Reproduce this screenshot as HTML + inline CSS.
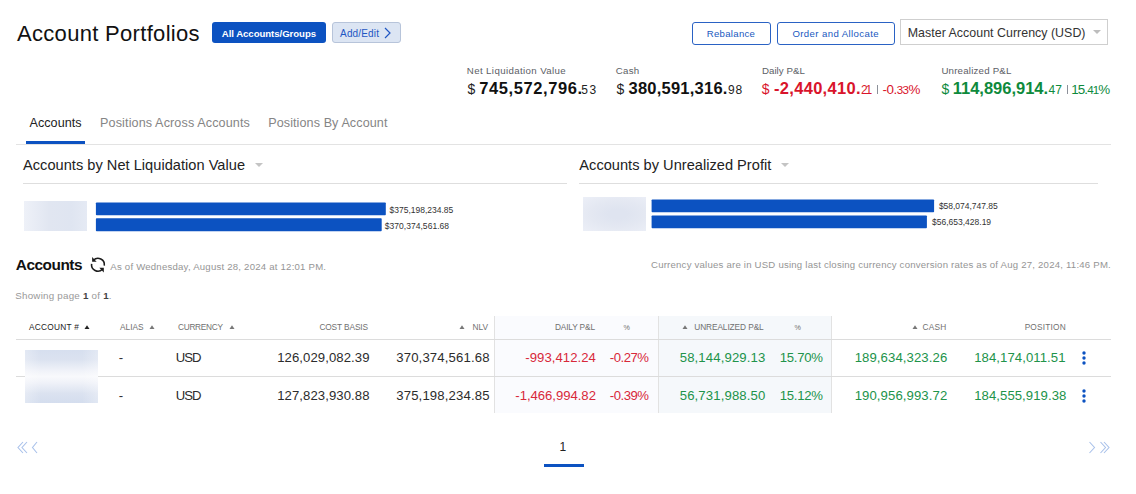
<!DOCTYPE html>
<html><head><meta charset="utf-8"><title>Account Portfolios</title>
<style>
html,body{margin:0;padding:0;background:#fff;}
body{width:1136px;height:494px;position:relative;overflow:hidden;font-family:"Liberation Sans",sans-serif;}
.t{position:absolute;white-space:nowrap;}
.r{position:absolute;}
</style></head><body>
<div id="k7dc986" class="t" style="left:17.00px;top:20.50px;font-size:22px;line-height:26px;color:#111;letter-spacing:0.311px;">Account Portfolios</div>
<div class="r" style="left:212px;top:22px;width:114px;height:21px;background:#0c52c1;border-radius:3px;"></div>
<div id="kbe6db4" class="t" style="left:221.82px;top:27.50px;font-size:9.6px;line-height:12px;color:#fff;font-weight:700;letter-spacing:-0.045px;">All Accounts/Groups</div>
<div class="r" style="left:332px;top:22px;width:69px;height:21px;background:#dce5f3;border:1px solid #b7c4da;box-sizing:border-box;border-radius:3px;"></div>
<div id="k07eb76" class="t" style="left:340.06px;top:28.00px;font-size:10px;line-height:12px;color:#1f56c3;letter-spacing:0.159px;">Add/Edit</div>
<svg class="r" style="left:383px;top:27px" width="9" height="12" viewBox="0 0 9 12"><path d="M2 1 L7 6 L2 11" fill="none" stroke="#1f56c3" stroke-width="1.2"/></svg>
<div class="r" style="left:692px;top:22px;width:79px;height:23px;border:1px solid #2a62c4;box-sizing:border-box;border-radius:3px;"></div>
<div id="ked9562" class="t" style="left:706.70px;top:28.00px;font-size:9.6px;line-height:12px;color:#2058c0;letter-spacing:0.300px;">Rebalance</div>
<div class="r" style="left:777px;top:22px;width:118px;height:23px;border:1px solid #2a62c4;box-sizing:border-box;border-radius:3px;"></div>
<div id="ke1895a" class="t" style="left:792.38px;top:28.00px;font-size:9.6px;line-height:12px;color:#2058c0;letter-spacing:0.403px;">Order and Allocate</div>
<div class="r" style="left:900px;top:19px;width:208px;height:26px;border:1px solid #cfcfcf;box-sizing:border-box;"></div>
<div id="kf368cb" class="t" style="left:907.76px;top:25.50px;font-size:12.4px;line-height:15px;color:#333;letter-spacing:0.028px;">Master Account Currency (USD)</div>
<svg class="r" style="left:1093px;top:30px" width="8" height="4" viewBox="0 0 8 4"><path d="M0 0 L8 0 L4 4Z" fill="#bdbdbd"/></svg>
<div id="kb8d709" class="t" style="left:466.82px;top:64.50px;font-size:9.7px;line-height:12px;color:#5c6066;letter-spacing:0.376px;">Net Liquidation Value</div>
<div id="k093867" class="t" style="left:615.82px;top:64.50px;font-size:9.7px;line-height:12px;color:#5c6066;letter-spacing:0.215px;">Cash</div>
<div id="kf58d0e" class="t" style="left:761.94px;top:64.50px;font-size:9.7px;line-height:12px;color:#5c6066;letter-spacing:0.040px;">Daily P&amp;L</div>
<div id="k35cd6d" class="t" style="left:941.38px;top:64.50px;font-size:9.7px;line-height:12px;color:#5c6066;letter-spacing:0.208px;">Unrealized P&amp;L</div>
<div id="k32260f" class="t" style="left:467.38px;top:80.50px;font-size:14px;line-height:17px;color:#222;">$</div>
<div id="k13e082" class="t" style="left:479.32px;top:78.00px;font-size:16.5px;line-height:20px;color:#111;font-weight:700;letter-spacing:0.582px;">745,572,796.</div>
<div id="kb41ef9" class="t" style="left:581.20px;top:83.00px;font-size:12px;line-height:14px;color:#222;letter-spacing:1.600px;">53</div>
<div id="k39bf1c" class="t" style="left:616.44px;top:80.50px;font-size:14px;line-height:17px;color:#222;">$</div>
<div id="kf3be98" class="t" style="left:628.50px;top:78.00px;font-size:16.5px;line-height:20px;color:#111;font-weight:700;letter-spacing:0.231px;">380,591,316.</div>
<div id="kea9ac0" class="t" style="left:728.00px;top:83.00px;font-size:12px;line-height:14px;color:#222;letter-spacing:0.800px;">98</div>
<div id="k6d3cdc" class="t" style="left:761.76px;top:80.50px;font-size:14px;line-height:17px;color:#d9142b;">$</div>
<div id="k84a776" class="t" style="left:774.00px;top:78.00px;font-size:16.5px;line-height:20px;color:#d9142b;font-weight:700;letter-spacing:0.304px;">-2,440,410.</div>
<div id="k3ec832" class="t" style="left:861.00px;top:83.00px;font-size:12px;line-height:14px;color:#d9142b;letter-spacing:-2.080px;">21</div>
<div class="r" style="left:877px;top:85px;width:1.2px;height:9px;background:#8c9099;"></div>
<div id="ke28620" class="t" style="left:882.44px;top:81.50px;font-size:13.4px;line-height:16px;color:#d9142b;letter-spacing:-0.480px;">-0.<span style="font-size:11.6px">33</span>%</div>
<div id="kfc0a1b" class="t" style="left:941.38px;top:80.50px;font-size:14px;line-height:17px;color:#0e8a3c;">$</div>
<div id="k32c1b9" class="t" style="left:952.76px;top:78.00px;font-size:16.5px;line-height:20px;color:#0e8a3c;font-weight:700;letter-spacing:-0.013px;">114,896,914.</div>
<div id="kf66f34" class="t" style="left:1048.50px;top:83.00px;font-size:12px;line-height:14px;color:#0e8a3c;">47</div>
<div class="r" style="left:1067px;top:85px;width:1.2px;height:9px;background:#8c9099;"></div>
<div id="k944a10" class="t" style="left:1071.20px;top:81.50px;font-size:13.4px;line-height:16px;color:#0e8a3c;letter-spacing:-0.896px;">15.<span style="font-size:11.6px">41</span>%</div>
<div id="kfa5fb3" class="t" style="left:29.56px;top:115.50px;font-size:12.6px;line-height:15px;color:#222;letter-spacing:0.024px;">Accounts</div>
<div id="k3f0277" class="t" style="left:100.08px;top:115.50px;font-size:12.6px;line-height:15px;color:#858585;letter-spacing:0.114px;">Positions Across Accounts</div>
<div id="kb1b9a8" class="t" style="left:268.20px;top:115.50px;font-size:12.6px;line-height:15px;color:#858585;letter-spacing:0.084px;">Positions By Account</div>
<div class="r" style="left:16px;top:144px;width:1095px;height:1px;background:#e3e3e3;"></div>
<div class="r" style="left:26px;top:141px;width:59px;height:3px;background:#0c52c1;"></div>
<div id="k8d5fb9" class="t" style="left:23.00px;top:156.40px;font-size:14.6px;line-height:18px;color:#222;letter-spacing:0.025px;">Accounts by Net Liquidation Value</div>
<svg class="r" style="left:255px;top:163px" width="8" height="4" viewBox="0 0 8 4"><path d="M0 0 L8 0 L4 4Z" fill="#c4c4c4"/></svg>
<div class="r" style="left:23px;top:183px;width:544px;height:1px;background:#dedede;"></div>
<div class="r" style="left:24px;top:201px;width:63px;height:30px;background:linear-gradient(90deg,#eef1f8,#e1e6f1 40%,#dfe5f1 75%,#e5eaf4);"></div>
<svg class="r" style="left:0;top:0" width="1136" height="260"><rect x="95.9" y="202.4" width="289.9" height="12.9" rx="0.8" fill="#0c52c1"/><rect x="95.9" y="218.3" width="285.8" height="12.9" rx="0.8" fill="#0c52c1"/><rect x="651.6" y="199.5" width="282.5" height="12.7" rx="0.8" fill="#0c52c1"/><rect x="651.6" y="215.5" width="275.3" height="12.8" rx="0.8" fill="#0c52c1"/></svg>
<div id="k875f6b" class="t" style="left:389.50px;top:205.00px;font-size:8.5px;line-height:10px;color:#333;">$375,198,234.85</div>
<div id="kad5ce5" class="t" style="left:384.76px;top:221.00px;font-size:8.5px;line-height:10px;color:#333;letter-spacing:0.034px;">$370,374,561.68</div>
<div id="k8ebbdb" class="t" style="left:579.32px;top:156.40px;font-size:14.6px;line-height:18px;color:#222;letter-spacing:0.019px;">Accounts by Unrealized Profit</div>
<svg class="r" style="left:781px;top:163px" width="8" height="4" viewBox="0 0 8 4"><path d="M0 0 L8 0 L4 4Z" fill="#c4c4c4"/></svg>
<div class="r" style="left:579px;top:183px;width:519px;height:1px;background:#dedede;"></div>
<div class="r" style="left:583px;top:197px;width:63px;height:34px;background:radial-gradient(ellipse at 55% 50%,#dfe4f0 20%,#e4e8f2 55%,#ecEff7 100%);"></div>
<div id="ke7ea78" class="t" style="left:938.88px;top:200.60px;font-size:8.5px;line-height:10px;color:#333;letter-spacing:-0.015px;">$58,074,747.85</div>
<div id="k7ef581" class="t" style="left:932.00px;top:216.70px;font-size:8.5px;line-height:10px;color:#333;">$56,653,428.19</div>
<div id="kdf97c9" class="t" style="left:15.76px;top:256.00px;font-size:15.4px;line-height:18px;color:#111;font-weight:700;letter-spacing:-0.480px;">Accounts</div>
<svg class="r" style="left:84px;top:252px" width="30" height="25" viewBox="0 0 30 25">
<path d="M9.42 8.22 A6.4 6.4 0 0 1 20.29 13.64" fill="none" stroke="#1c1c1c" stroke-width="1.6"/>
<path d="M7.61 11.86 A6.4 6.4 0 0 0 18.48 17.28" fill="none" stroke="#1c1c1c" stroke-width="1.6"/>
<path d="M8.1 5.0 L8.1 9.7 L12.6 9.7 Z" fill="#1c1c1c"/>
<path d="M19.8 20.5 L19.8 15.8 L15.3 15.8 Z" fill="#1c1c1c"/>
</svg>
<div id="k90735d" class="t" style="left:110.32px;top:260.80px;font-size:9.6px;line-height:12px;color:#959595;letter-spacing:0.220px;">As of Wednesday, August 28, 2024 at 12:01 PM.</div>
<div id="k9149b4" class="t" style="left:651.00px;top:259.00px;font-size:9.6px;line-height:12px;color:#959595;letter-spacing:0.216px;">Currency values are in USD using last closing currency conversion rates as of Aug 27, 2024, 11:46 PM.</div>
<div id="k97567b" class="t" style="left:15.28px;top:290.00px;font-size:9.8px;line-height:12px;color:#999;letter-spacing:0.220px;">Showing page <b style="color:#444">1</b> of <b style="color:#444">1</b>.</div>
<div class="r" style="left:495px;top:316px;width:164px;height:97px;background:#fafbfe;"></div>
<div class="r" style="left:659px;top:316px;width:172px;height:97px;background:#f5f8fb;"></div>
<div class="r" style="left:494px;top:316px;width:1px;height:97px;background:#e2e2e2;"></div>
<div class="r" style="left:658px;top:316px;width:1px;height:97px;background:#e2e2e2;"></div>
<div class="r" style="left:831px;top:316px;width:1px;height:97px;background:#e2e2e2;"></div>
<div class="r" style="left:16px;top:339px;width:1095px;height:1px;background:#dcdcdc;"></div>
<div class="r" style="left:16px;top:376px;width:1095px;height:1px;background:#dcdcdc;"></div>
<div id="k4f9642" class="t" style="left:29.00px;top:322.00px;font-size:8.3px;line-height:10px;color:#222;letter-spacing:0.260px;">ACCOUNT #</div>
<svg class="r" style="left:84px;top:325px" width="6" height="4" viewBox="0 0 6 4"><path d="M0.5 4 L5.5 4 L3 0.2Z" fill="#222"/></svg>
<div id="k850b2c" class="t" style="left:120.00px;top:322.00px;font-size:8.3px;line-height:10px;color:#707070;">ALIAS</div>
<svg class="r" style="left:149px;top:325px" width="6" height="4" viewBox="0 0 6 4"><path d="M0.5 4 L5.5 4 L3 0.2Z" fill="#777"/></svg>
<div id="k6497aa" class="t" style="left:178.00px;top:322.00px;font-size:8.3px;line-height:10px;color:#707070;letter-spacing:-0.298px;">CURRENCY</div>
<svg class="r" style="left:228.5px;top:325px" width="6" height="4" viewBox="0 0 6 4"><path d="M0.5 4 L5.5 4 L3 0.2Z" fill="#777"/></svg>
<div id="k6be1c3" class="t" style="left:319.38px;top:322.00px;font-size:8.3px;line-height:10px;color:#707070;letter-spacing:-0.106px;">COST BASIS</div>
<svg class="r" style="left:459px;top:325px" width="6" height="4" viewBox="0 0 6 4"><path d="M0.5 4 L5.5 4 L3 0.2Z" fill="#777"/></svg>
<div id="k346a8f" class="t" style="left:472.50px;top:322.00px;font-size:8.3px;line-height:10px;color:#707070;">NLV</div>
<div id="k496428" class="t" style="left:554.94px;top:322.00px;font-size:8.3px;line-height:10px;color:#707070;letter-spacing:-0.140px;">DAILY P&amp;L</div>
<div id="k6b3da3" class="t" style="left:623.50px;top:323.00px;font-size:7.2px;line-height:9px;color:#707070;">%</div>
<svg class="r" style="left:682px;top:325px" width="6" height="4" viewBox="0 0 6 4"><path d="M0.5 4 L5.5 4 L3 0.2Z" fill="#777"/></svg>
<div id="k58d156" class="t" style="left:694.26px;top:322.00px;font-size:8.3px;line-height:10px;color:#707070;letter-spacing:-0.084px;">UNREALIZED P&amp;L</div>
<div id="k4d809d" class="t" style="left:794.38px;top:323.00px;font-size:7.2px;line-height:9px;color:#707070;">%</div>
<svg class="r" style="left:912px;top:325px" width="6" height="4" viewBox="0 0 6 4"><path d="M0.5 4 L5.5 4 L3 0.2Z" fill="#777"/></svg>
<div id="k9810dc" class="t" style="left:922.44px;top:322.00px;font-size:8.3px;line-height:10px;color:#707070;letter-spacing:0.267px;">CASH</div>
<div id="kc58f99" class="t" style="left:1024.64px;top:322.00px;font-size:8.3px;line-height:10px;color:#707070;letter-spacing:0.207px;">POSITION</div>
<div id="k22b97c" class="t" style="left:118.80px;top:349.50px;font-size:13.15px;line-height:16px;color:#333;">-</div>
<div id="kd37189" class="t" style="left:175.70px;top:349.50px;font-size:13.15px;line-height:16px;color:#2c2c2c;letter-spacing:-0.960px;">USD</div>
<div id="k102e3c" class="t" style="left:277.20px;top:349.50px;font-size:13.15px;line-height:16px;color:#2c2c2c;letter-spacing:0.075px;">126,029,082.39</div>
<div id="k016f5f" class="t" style="left:396.26px;top:349.50px;font-size:13.15px;line-height:16px;color:#2c2c2c;letter-spacing:0.146px;">370,374,561.68</div>
<div id="ka707cb" class="t" style="left:525.26px;top:349.50px;font-size:13.15px;line-height:16px;color:#d8283a;letter-spacing:0.048px;">-993,412.24</div>
<div id="kcab757" class="t" style="left:609.76px;top:349.50px;font-size:13.15px;line-height:16px;color:#d8283a;letter-spacing:-0.480px;">-0.27%</div>
<div id="k07c751" class="t" style="left:679.70px;top:349.50px;font-size:13.15px;line-height:16px;color:#21934a;letter-spacing:0.133px;">58,144,929.13</div>
<div id="kdd18ba" class="t" style="left:779.76px;top:349.50px;font-size:13.15px;line-height:16px;color:#21934a;letter-spacing:-0.288px;">15.70%</div>
<div id="kf1d05e" class="t" style="left:854.64px;top:349.50px;font-size:13.15px;line-height:16px;color:#21934a;letter-spacing:0.098px;">189,634,323.26</div>
<div id="k1ee137" class="t" style="left:974.20px;top:349.50px;font-size:13.15px;line-height:16px;color:#21934a;letter-spacing:0.075px;">184,174,011.51</div>
<svg class="r" style="left:1081px;top:351px" width="6" height="14" viewBox="0 0 6 14"><circle cx="3" cy="2" r="1.7" fill="#0c52c1"/><circle cx="3" cy="7" r="1.7" fill="#0c52c1"/><circle cx="3" cy="12" r="1.7" fill="#0c52c1"/></svg>
<div id="kf212fb" class="t" style="left:118.80px;top:387.50px;font-size:13.15px;line-height:16px;color:#333;">-</div>
<div id="kf7f64b" class="t" style="left:175.70px;top:387.50px;font-size:13.15px;line-height:16px;color:#2c2c2c;letter-spacing:-0.960px;">USD</div>
<div id="k12bde7" class="t" style="left:277.20px;top:387.50px;font-size:13.15px;line-height:16px;color:#2c2c2c;letter-spacing:0.075px;">127,823,930.88</div>
<div id="k56f2be" class="t" style="left:396.26px;top:387.50px;font-size:13.15px;line-height:16px;color:#2c2c2c;letter-spacing:0.146px;">375,198,234.85</div>
<div id="kc2f3a1" class="t" style="left:515.32px;top:387.50px;font-size:13.15px;line-height:16px;color:#d8283a;letter-spacing:-0.039px;">-1,466,994.82</div>
<div id="k69c880" class="t" style="left:609.76px;top:387.50px;font-size:13.15px;line-height:16px;color:#d8283a;letter-spacing:-0.480px;">-0.39%</div>
<div id="k7f644f" class="t" style="left:679.70px;top:387.50px;font-size:13.15px;line-height:16px;color:#21934a;letter-spacing:0.133px;">56,731,988.50</div>
<div id="kc15aac" class="t" style="left:779.76px;top:387.50px;font-size:13.15px;line-height:16px;color:#21934a;letter-spacing:-0.288px;">15.12%</div>
<div id="k529656" class="t" style="left:854.64px;top:387.50px;font-size:13.15px;line-height:16px;color:#21934a;letter-spacing:0.098px;">190,956,993.72</div>
<div id="k022a6c" class="t" style="left:974.20px;top:387.50px;font-size:13.15px;line-height:16px;color:#21934a;letter-spacing:0.061px;">184,555,919.38</div>
<svg class="r" style="left:1081px;top:388.5px" width="6" height="14" viewBox="0 0 6 14"><circle cx="3" cy="2" r="1.7" fill="#0c52c1"/><circle cx="3" cy="7" r="1.7" fill="#0c52c1"/><circle cx="3" cy="12" r="1.7" fill="#0c52c1"/></svg>
<div class="r" style="left:25px;top:350px;width:73px;height:53px;background:linear-gradient(90deg,rgba(255,255,255,.3),rgba(255,255,255,0) 22%,rgba(255,255,255,0) 78%,rgba(255,255,255,.3)),linear-gradient(180deg,#d6dfef,#dbe2f0 18%,#f1f3f9 40%,#f8f9fc 50%,#f1f3f9 60%,#dbe2f0 82%,#d4ddee);"></div>
<svg class="r" style="left:16px;top:441px" width="24" height="13" viewBox="0 0 24 13">
<path d="M7 1 L2 6.5 L7 12 M11 1 L6 6.5 L11 12 M21 1 L16.5 6.5 L21 12" fill="none" stroke="#a9c1ea" stroke-width="1.1"/></svg>
<svg class="r" style="left:1087px;top:441px" width="24" height="13" viewBox="0 0 24 13">
<path d="M2.5 1 L7.5 6.5 L2.5 12 M13.5 1 L18.5 6.5 L13.5 12 M17 1 L22 6.5 L17 12" fill="none" stroke="#a9c1ea" stroke-width="1.1"/></svg>
<div id="k126d8b" class="t" style="left:559.52px;top:440.00px;font-size:12px;line-height:14px;color:#222;">1</div>
<div class="r" style="left:544px;top:464px;width:40px;height:3px;background:#0c52c1;"></div>
</body></html>
